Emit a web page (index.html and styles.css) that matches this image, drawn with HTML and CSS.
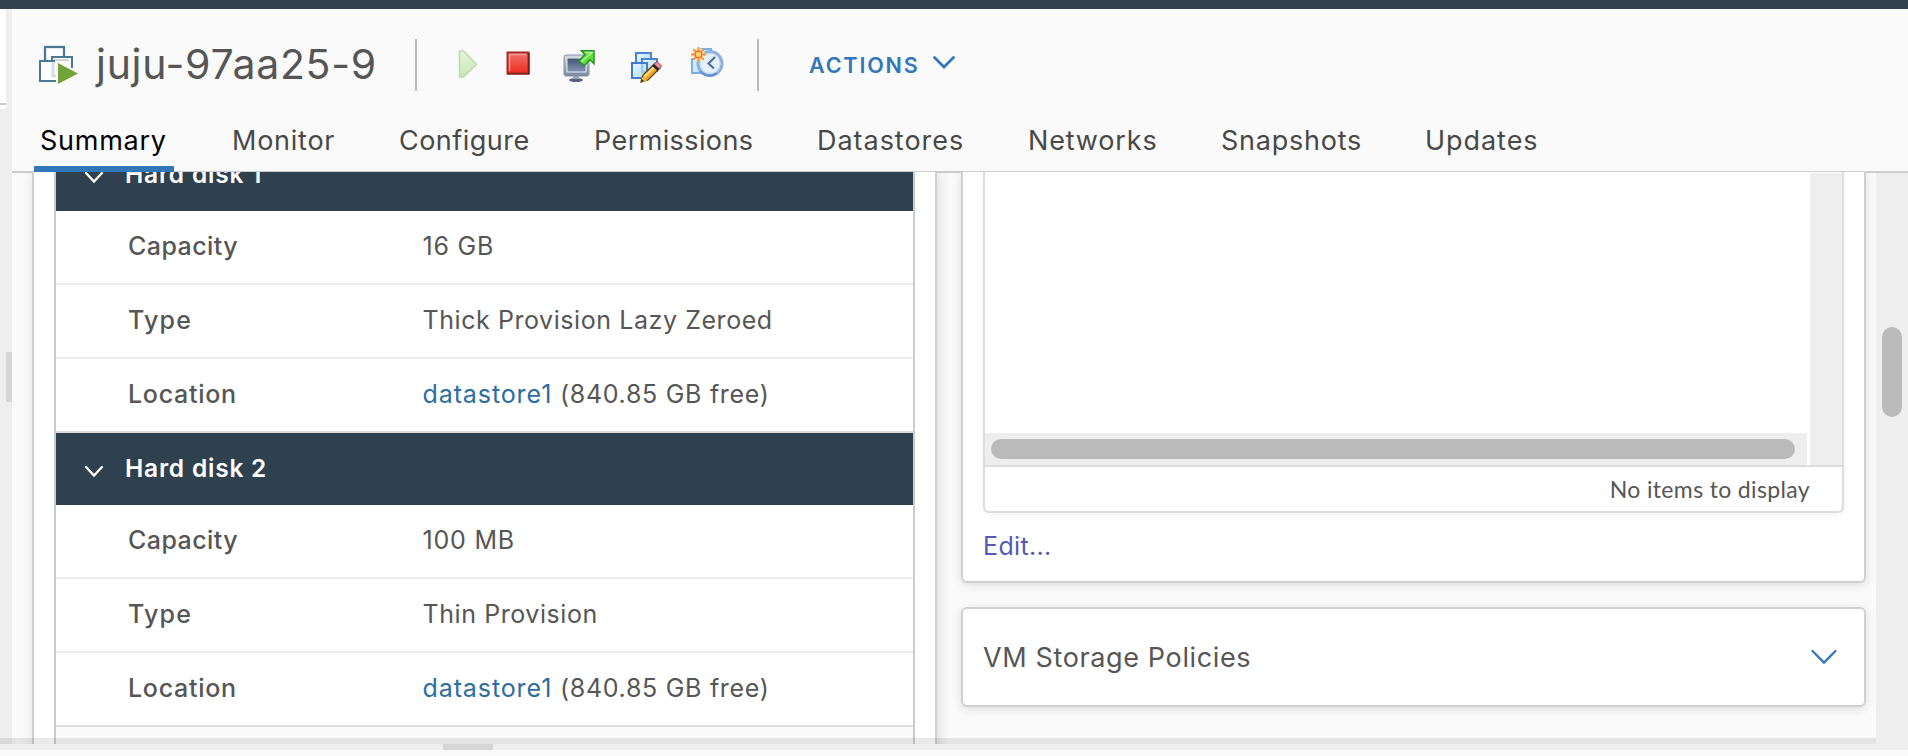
FILE: index.html
```html
<!DOCTYPE html>
<html lang="en">
<head>
<meta charset="utf-8">
<title>juju-97aa25-9</title>
<link rel="stylesheet" href="styles.css">
</head>
<body>
<div class="topbar"></div>
<div class="shell">
  <aside class="nav"><div class="nav-top"></div></aside>
  <div class="splitter"><div class="splitter-grip"></div></div>
  <main class="main">
    <header class="title-row">
      <svg class="vm-icon" width="40" height="40" viewBox="0 0 40 40">
        <path d="M6 2h19v16H6z" fill="#fff" stroke="#c9d6df" stroke-width="3"/>
        <path d="M6 15V2h19v9" fill="none" stroke="#4d7894" stroke-width="2"/>
        <path d="M13 12h20v16H13z" fill="#fff"/>
        <path d="M14 30V15h16" fill="none" stroke="#c9d6df" stroke-width="2"/>
        <path d="M13 15v-3h20v11" fill="none" stroke="#4d7894" stroke-width="2"/>
        <path d="M17 36H1V16h15" fill="#fff" stroke="#4d7894" stroke-width="2"/>
        <path d="M14 17v14h4" fill="none" stroke="#d5dfe6" stroke-width="3"/>
        <path d="M17 16l22 12-22 12z" fill="#fff"/>
        <path d="M19 18l20 10.500L19 39z" fill="#72a338"/>
      </svg>
      <h1 class="vm-name">juju-97aa25-9</h1>
      <div class="divider divider-first"></div>
      <svg class="tool tool-play" width="22" height="32" viewBox="0 0 22 32">
        <defs>
          <linearGradient id="gp" x1="0" y1="0" x2="0" y2="1"><stop offset="0" stop-color="#e6f3dc"/><stop offset="1" stop-color="#c9e6b6"/></linearGradient>
          <linearGradient id="gs" x1="0" y1="0" x2="0" y2="1"><stop offset="0" stop-color="#f0736b"/><stop offset="1" stop-color="#ee2a20"/></linearGradient>
          <linearGradient id="gm" x1="0" y1="0" x2="0" y2="1"><stop offset="0" stop-color="#44546f"/><stop offset="1" stop-color="#8394b2"/></linearGradient>
          <linearGradient id="gb" x1="0" y1="0" x2="1" y2="1"><stop offset="0" stop-color="#e8f7ff"/><stop offset="1" stop-color="#aedcf8"/></linearGradient>
          <linearGradient id="gf" x1="0" y1="0" x2="0" y2="1"><stop offset="0" stop-color="#d4d9e0"/><stop offset="1" stop-color="#75869f"/></linearGradient>
        </defs>
        <path d="M2.500 3h4L19.500 16.500 6.500 29h-4z" fill="url(#gp)" stroke="#bcdbae" stroke-width="1.500" stroke-linejoin="round"/>
      </svg>
      <svg class="tool tool-stop" width="24" height="24" viewBox="0 0 24 24">
        <path d="M1.500 1.500h21v21h-21z" fill="url(#gs)" stroke="#a52a25" stroke-width="2"/>
        <path d="M3.500 20V3.500H20" fill="none" stroke="#f79d97" stroke-width="1.300"/>
        <path d="M1 23h22V2" fill="none" stroke="#701713" stroke-width="1.200"/>
      </svg>
      <svg class="tool tool-console" width="32" height="32" viewBox="0 0 32 32">
        <ellipse cx="13" cy="30" rx="7" ry="2" fill="#53647e"/>
        <path d="M10 25h6v4h-6z" fill="#9aa5b5"/>
        <rect x="1" y="5" width="25" height="21" rx="2" fill="url(#gf)" stroke="#8793a6"/>
        <rect x="4" y="8" width="19" height="14" fill="url(#gm)" stroke="#e9edf2"/>
        <path d="M18.500 .8H31v13l-4-4-6 6-5-5 6-6z" fill="#63dd38" stroke="#24942a" stroke-width="1.500"/>
        <path d="M22 2.500h7L18 12" fill="none" stroke="#b6f59a" stroke-width="1.500"/>
      </svg>
      <svg class="tool tool-edit" width="32" height="32" viewBox="0 0 32 32">
        <path d="M5 2h15v12H5z" fill="url(#gb)" stroke="#4c82d2" stroke-width="2"/>
        <path d="M11 8h15v12H11z" fill="url(#gb)" stroke="#4c82d2" stroke-width="2"/>
        <path d="M1 12h15v15H1z" fill="url(#gb)" stroke="#4179cf" stroke-width="2"/>
        <path d="M11 13v8h5" fill="none" stroke="#87bdec" stroke-width="1.500"/>
        <path d="M10 31l2-7L24 12.500l5 4.500-12 12z" fill="#f3a531" stroke="#694012" stroke-width="1.300"/>
        <path d="M13 26L25 14.500" stroke="#ffdf7c" stroke-width="2"/>
        <path d="M23 13l3-2.500 4.500 4.500-2.500 3z" fill="#f08c9c" stroke="#a6404d"/>
        <path d="M22 14l5.500 5" stroke="#222a35" stroke-width="2.500"/>
        <path d="M10 31l1-5 5 4z" fill="#e7cf31"/><path d="M10 31l.6-3 2.500 2z" fill="#222"/>
      </svg>
      <svg class="tool tool-snap" width="34" height="32" viewBox="0 0 34 32">
        <path d="M8 2h12v12H8zM1 12h12v14H1z" fill="url(#gb)" stroke="#7dade1" stroke-width="2"/>
        <circle cx="19" cy="16.500" r="12" fill="#e8f2fa" stroke="#8db0df" stroke-width="3"/>
        <circle cx="19" cy="16.500" r="10" fill="#e4f1fa" stroke="#c4daf0" stroke-width="1"/>
        <path d="M9 24a12 12 0 0 0 17 2" fill="none" stroke="#5f90d2" stroke-width="2"/>
        <path d="M24 10l-6.500 6.500 5.500 5" fill="none" stroke="#4f7397" stroke-width="2.200"/>
        <circle cx="7.500" cy="7.500" r="6.500" fill="#ffe58f"/>
        <path d="M7.500 0v15M0 7.500h15M2.200 2.200l10.600 10.600M12.800 2.200L2.200 12.800" stroke="#f09150" stroke-width="1.800"/>
        <circle cx="7.500" cy="7.500" r="3.300" fill="#ffcf73" stroke="#ec6e32" stroke-width="1.200"/>
      </svg>
      <div class="divider divider-last"></div>
      <button class="actions">ACTIONS
        <svg width="22" height="13" viewBox="0 0 22 13"><path d="M1.500 1.500L11 11l9.500-9.500" fill="none" stroke="#3277b9" stroke-width="2.800" stroke-linecap="round"/></svg>
      </button>
    </header>
    <nav class="tabs">
      <a class="tab tab-active">Summary</a>
      <a class="tab tab-monitor">Monitor</a>
      <a class="tab tab-configure">Configure</a>
      <a class="tab tab-permissions">Permissions</a>
      <a class="tab tab-datastores">Datastores</a>
      <a class="tab tab-networks">Networks</a>
      <a class="tab tab-snapshots">Snapshots</a>
      <a class="tab tab-updates">Updates</a>
    </nav>
    <div class="content">
      <section class="hardware">
        <div class="hw-table">
          <div class="hw-head"><svg width="20" height="13" viewBox="0 0 20 13"><path d="M2 2l8 8.500L18 2" fill="none" stroke="#fff" stroke-width="2.300" stroke-linecap="round"/></svg><span>Hard disk 1</span></div>
          <div class="hw-row"><span class="k k-cap">Capacity</span><span class="v v-short">16 GB</span></div>
          <div class="hw-row"><span class="k k-type">Type</span><span class="v">Thick Provision Lazy Zeroed</span></div>
          <div class="hw-row hw-row-last"><span class="k">Location</span><span class="v v-loc"><a>datastore1</a> (840.85 GB free)</span></div>
          <div class="hw-head"><svg width="20" height="13" viewBox="0 0 20 13"><path d="M2 2l8 8.500L18 2" fill="none" stroke="#fff" stroke-width="2.300" stroke-linecap="round"/></svg><span>Hard disk 2</span></div>
          <div class="hw-row"><span class="k k-cap">Capacity</span><span class="v v-short">100 MB</span></div>
          <div class="hw-row"><span class="k k-type">Type</span><span class="v">Thin Provision</span></div>
          <div class="hw-row hw-row-last"><span class="k">Location</span><span class="v v-loc"><a>datastore1</a> (840.85 GB free)</span></div>
          <div class="hw-rest"></div>
        </div>
      </section>
      <div class="right">
        <section class="card attributes">
          <div class="grid">
            <div class="grid-body">
              <div class="grid-view"><div class="hscroll"><div class="hthumb"></div></div></div>
              <div class="vscroll"></div>
            </div>
            <div class="grid-foot">No items to display</div>
          </div>
          <a class="edit">Edit...</a>
        </section>
        <section class="card policies">
          <h2>VM Storage Policies</h2>
          <svg width="28" height="17" viewBox="0 0 28 17"><path d="M2.500 2L14 13.500 25.500 2" fill="none" stroke="#3277b9" stroke-width="2.300" stroke-linecap="round"/></svg>
        </section>
      </div>
      <div class="page-scroll"><div class="page-thumb"></div></div>
    </div>
  </main>
  <div class="shade"></div>
</div>
<footer class="dock"><div class="dock-grip"></div></footer>
</body>
</html>
```
FILE: styles.css
```css
* { box-sizing: border-box; }
body {
  margin: 0;
  width: 1908px;
  height: 756px;
  overflow: hidden;
  display: flex;
  flex-direction: column;
  background: #fafafa;
  color: #565656;
  font-family: Inter, "Liberation Sans", sans-serif;
  white-space: nowrap;
}
svg { display: block; flex: none; }
.topbar { height: 9px; flex: none; background: #34424f; }
.shell { height: 735px; flex: none; display: flex; position: relative; }
.nav { width: 6px; background: #eee; }
.nav-top { height: 100px; padding-top: 94px; background: #fff; }
.nav-top::before { content: ""; display: block; height: 2px; background: #ccc; }
.splitter { width: 6px; background: #eee; padding-top: 343px; }
.splitter-grip { height: 50px; background: #d6d6d6; }
.main { width: 1896px; display: flex; flex-direction: column; }
.shade { position: absolute; left: 0; bottom: 0; width: 1876px; height: 6px; background: rgba(0, 0, 0, .085); }

.title-row { height: 100px; flex: none; padding: 10px 0 0 27px; display: flex; align-items: center; }
.vm-icon { margin-top: 2px; }
.vm-name { margin: 0 0 0 17px; width: 320px; font-size: 41px; font-weight: 400; line-height: 50px; letter-spacing: .7px; }
.divider { width: 2px; height: 52px; margin-top: 2px; background: #bbb; }
.divider-first { margin-left: -1px; }
.tool-play { margin-left: 40px; }
.tool-stop { margin: -2px 0 0 27px; }
.tool-console { margin: 4px 0 0 33px; }
.tool-edit { margin: 6px 0 0 36px; }
.tool-snap { margin: -2px 0 0 28px; }
.divider-last { margin-left: 32px; }
.actions { margin: 2px 0 0 50px; padding: 0; border: 0; background: none; display: flex; gap: 13px; font: 600 21.500px/30px Inter, sans-serif; letter-spacing: 1.850px; color: #3277b9; }
.actions svg { margin-top: 6px; }

.tabs { height: 63px; flex: none; padding-left: 22px; display: flex; border-bottom: 1px solid #ccc; font-size: 27px; line-height: 64px; color: #484848; }
.tab { flex: none; height: 63px; letter-spacing: .75px; }
.tab-active { width: 140px; padding-left: 6px; margin-right: 58px; color: #000; box-shadow: inset 0 -6px #3277b9; }
.tab-monitor { width: 167px; }
.tab-configure { width: 195px; letter-spacing: .47px; }
.tab-permissions { width: 223px; letter-spacing: .4px; }
.tab-datastores { width: 211px; letter-spacing: .97px; }
.tab-networks { width: 193px; letter-spacing: .85px; }
.tab-snapshots { width: 204px; }
.tab-updates { letter-spacing: .95px; }

.content { height: 572px; overflow: hidden; display: flex; padding-left: 20px; box-shadow: inset 0 1px #ccc; }
.hardware { width: 905px; height: 600px; padding: 0 20px; overflow: hidden; background: #fff; border: solid #d0d0d0; border-width: 0 2px; box-shadow: 2px 0 12px rgba(0, 0, 0, .13); }
.hw-table { width: 861px; border: solid #ccc; border-width: 0 2px; margin-top: -33px; height: 630px; }
.hw-head { height: 72px; padding: 0 0 2px 28px; display: flex; align-items: center; background: #2f404e; color: #fff; font-size: 24.500px; font-weight: 600; letter-spacing: .78px; }
.hw-head svg { margin-top: 7px; }
.hw-head span { margin-left: 21px; }
.hw-row { height: 74px; padding: 0 0 2px 72px; display: flex; align-items: center; border-bottom: 2px solid #eee; font-size: 25px; }
.hw-row-last { border-color: #ddd; }
.k { width: 294.500px; font-weight: 500; letter-spacing: .72px; }
.k-cap { letter-spacing: .45px; }
.k-type { letter-spacing: 1.200px; }
.v { letter-spacing: .57px; }
.v-short { letter-spacing: .8px; }
.v-loc { letter-spacing: .7px; }
.v a { color: #2b6e9f; letter-spacing: .9px; }
.hw-rest { height: 30px; background: #fafafa; }

.right { width: 905px; margin-left: 24px; display: flex; flex-direction: column; gap: 24px; }
.card { background: #fff; border: 2px solid #d0d0d0; border-radius: 6px; box-shadow: 0 2px 10px rgba(0, 0, 0, .12); }
.attributes { height: 411px; border-top: 0; border-radius: 0 0 6px 6px; padding: 0 20px; flex: none; }
.grid { width: 861px; height: 341px; border: 2px solid #ddd; border-top: 0; border-radius: 0 0 6px 6px; box-shadow: 0 2px 6px rgba(0, 0, 0, .05); }
.grid-body { height: 293px; padding-top: 1px; display: flex; justify-content: space-between; }
.grid-view { width: 822px; display: flex; align-items: flex-end; }
.hscroll { width: 822px; height: 32px; padding: 6px; background: #eee; }
.hthumb { width: 804px; height: 20px; border-radius: 10px; background: #bababa; }
.vscroll { width: 32px; background: #eee; }
.grid-foot { height: 46px; border-top: 2px solid #ddd; padding-right: 32px; text-align: right; font: 23px/44px Lato, sans-serif; letter-spacing: .35px; }
.edit { display: block; margin-top: 14px; font-size: 25px; line-height: 38px; letter-spacing: .35px; color: #5659b8; }
.policies { height: 100px; flex: none; padding: 0 26px 0 20px; display: flex; justify-content: space-between; align-items: center; }
.policies h2 { margin: 0; font-size: 27px; font-weight: 400; letter-spacing: .63px; }
.page-scroll { width: 32px; height: 571px; margin: 1px 0 0 10px; padding: 154px 6px 0; background: #eee; }
.page-thumb { width: 20px; height: 90px; border-radius: 10px; background: #bababa; }

.dock { height: 12px; flex: none; padding-left: 443px; background: #eee; border-bottom: 6px solid #fafafa; }
.dock-grip { width: 50px; height: 6px; background: #d6d6d6; }
```
